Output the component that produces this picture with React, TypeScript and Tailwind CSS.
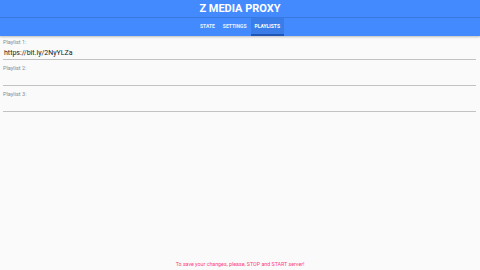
import React, { useState } from "react";

const tabs = ["STATE", "SETTINGS", "PLAYLISTS"];

function PlaylistField({ label, value }: { label: string; value: string }) {
  return (
    <div className="flex flex-col">
      <label className="text-[5.5px] leading-[8px] text-[#8a8a8a] pt-[1px]">{label}</label>
      <div className="h-[14px] border-b border-[#c2c2c2] flex items-center">
        <span className="text-[7px] text-[#222] pl-[1px] leading-[10px]">{value}</span>
      </div>
    </div>
  );
}

export default function App() {
  const [active] = useState("PLAYLISTS");
  return (
    <div
      className="w-[480px] h-[270px] bg-[#fafafa] flex flex-col"
      style={{ fontFamily: "Roboto, 'Liberation Sans', sans-serif" }}
    >
      <header className="bg-[#448aff] shadow-[0_1px_2px_rgba(0,0,0,0.25)]">
        <div className="h-[18px] flex items-center justify-center border-b border-[#3a78e0]">
          <h1 className="text-white font-bold text-[11px] leading-none">Z MEDIA PROXY</h1>
        </div>
        <nav className="h-[18px] flex justify-center">
          {tabs.map((t) => (
            <div
              key={t}
              className={
                t === active
                  ? "px-[4px] flex items-center bg-[#3b7de8] border-b-2 border-[#1f56b5] pt-[2px] text-white text-[5px] font-bold"
                  : "px-[4px] flex items-center text-[#eaf1ff] text-[5px] font-bold"
              }
            >
              {t}
            </div>
          ))}
        </nav>
      </header>
      <main className="flex-1 pl-[3px] pr-[4px] pt-[1px] flex flex-col gap-[3px]">
        <PlaylistField label="Playlist 1:" value="https://bit.ly/2NyYLZa" />
        <PlaylistField label="Playlist 2:" value="" />
        <PlaylistField label="Playlist 3:" value="" />
      </main>
      <footer className="h-[9px] flex items-start justify-center">
        <p className="text-[5.3px] leading-[7px] text-[#ff4081]">To save your changes, please, STOP and START server!</p>
      </footer>
    </div>
  );
}
